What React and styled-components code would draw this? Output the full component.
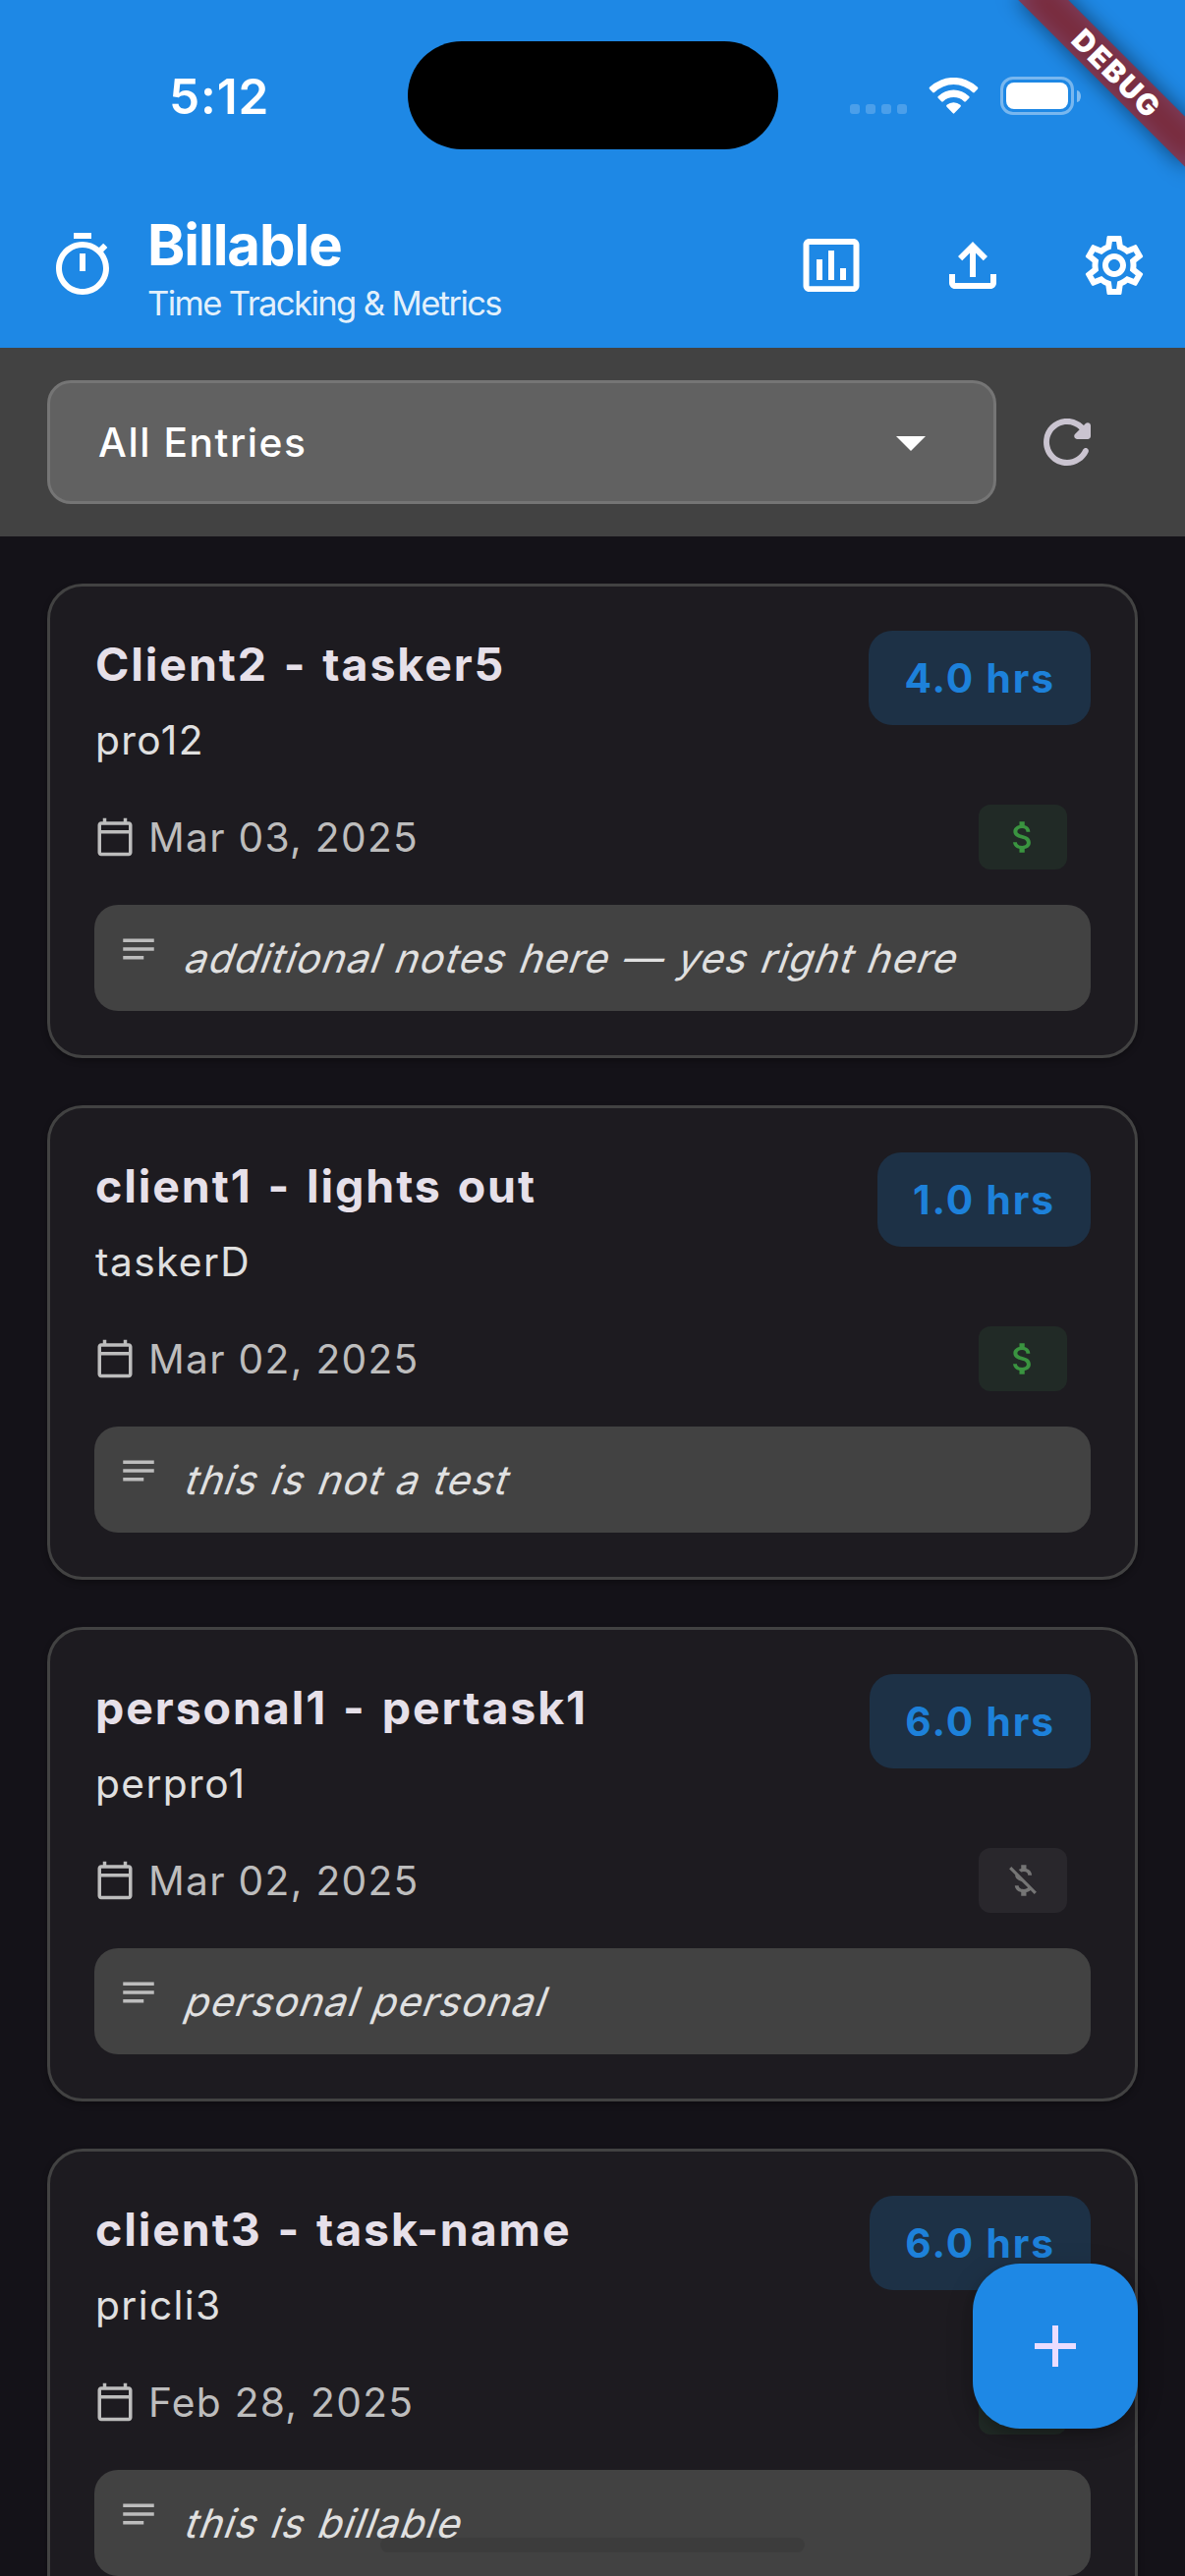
import React from "react";
import styled, { createGlobalStyle } from "styled-components";

const GlobalStyle = createGlobalStyle`
  * { box-sizing: border-box; }
  html, body { margin: 0; padding: 0; background: #141218; }
`;

const Screen = styled.div`
  position: relative;
  width: 1206px;
  height: 2622px;
  overflow: hidden;
  display: flex;
  flex-direction: column;
  background: #141218;
  font-family: Inter, Roboto, "Liberation Sans", sans-serif;
  -webkit-font-smoothing: antialiased;
`;

const Header = styled.header`
  flex: none;
  height: 354px;
  background: #1e88e5;
  color: #fff;
`;

const StatusBar = styled.div`
  height: 186px;
  padding-top: 9px;
  display: grid;
  grid-template-columns: 415px 377px 1fr;
  align-items: center;
`;

const Clock = styled.div`
  padding-left: 172px;
  font-size: 49.5px;
  line-height: 60px;
  font-weight: 600;
  letter-spacing: 0.9px;
`;

const Island = styled.div`
  height: 110px;
  margin-top: -1px;
  border-radius: 55px;
  background: #000;
`;

const StatusIcons = styled.div`
  padding-left: 73px;
  display: flex;
  align-items: center;
  gap: 22px;
`;

const Dots = styled.div`
  display: flex;
  gap: 6px;
  margin-top: 27px;
`;

const Dot = styled.i`
  width: 10px;
  height: 10px;
  border-radius: 3px;
  background: rgba(255, 255, 255, 0.2);
`;

const Battery = styled.div`
  display: flex;
  align-items: center;
  gap: 3px;
`;

const BatteryShell = styled.div`
  width: 75px;
  height: 39px;
  padding: 3px;
  border: 3px solid rgba(255, 255, 255, 0.4);
  border-radius: 13px;
  display: flex;
`;

const BatteryFill = styled.div`
  flex: 1;
  border-radius: 8px;
  background: #fff;
`;

const BatteryTip = styled.div`
  width: 4px;
  height: 12px;
  border-radius: 0 4px 4px 0 / 0 6px 6px 0;
  background: rgba(255, 255, 255, 0.45);
`;

const AppBar = styled.div`
  height: 168px;
  padding: 0 0 0 48px;
  display: flex;
  align-items: center;
`;

const Titles = styled.div`
  flex: 1;
  padding: 3px 0 0 30px;
`;

const Title = styled.h1`
  margin: 0 0 1px;
  font-size: 58px;
  line-height: 72px;
  font-weight: 700;
  letter-spacing: -1.05px;
`;

const Subtitle = styled.div`
  font-size: 34.6px;
  line-height: 44px;
  letter-spacing: -1.6px;
  color: rgba(255, 255, 255, 0.9);
`;

const IconButton = styled.button`
  width: 144px;
  height: 144px;
  padding: 0;
  border: 0;
  background: none;
  color: ${(p) => p.$color || "#fff"};
  display: flex;
  align-items: center;
  justify-content: center;
`;

const Glyph = styled.svg`
  display: block;
  flex: none;
  width: ${(p) => p.$size}px;
  height: ${(p) => p.$size}px;
  fill: currentColor;
`;

const FilterBar = styled.div`
  flex: none;
  height: 192px;
  padding: 0 48px;
  display: flex;
  align-items: center;
  background: #424242;
`;

const Select = styled.div`
  flex: 1;
  height: 126px;
  padding: 0 48px 0 49px;
  border: 3px solid #757575;
  border-radius: 24px;
  background: #616161;
  color: #fff;
  display: flex;
  align-items: center;
  justify-content: space-between;
`;

const SelectValue = styled.span`
  padding-top: 1px;
  font-size: 40.7px;
  line-height: 60px;
  font-weight: 500;
  letter-spacing: 1.55px;
`;

const List = styled.main`
  padding: 48px;
  display: flex;
  flex-direction: column;
  gap: 48px;
`;

const Card = styled.article`
  flex: none;
  height: 483px;
  padding: 45px;
  border: 3px solid #424242;
  border-radius: 36px;
  background: #1d1b20;
  box-shadow: 0 3px 6px rgba(0, 0, 0, 0.3);
`;

const CardHead = styled.div`
  height: 141px;
  padding-left: 1px;
  display: flex;
  align-items: flex-start;
  justify-content: space-between;
`;

const CardTitle = styled.h2`
  margin: 0 0 14px;
  font-size: 46.5px;
  line-height: 68px;
  font-weight: 700;
  letter-spacing: 1.9px;
  word-spacing: 3px;
  color: #e6e0e9;
`;

const Project = styled.div`
  font-size: 40.7px;
  line-height: 60px;
  letter-spacing: 1.4px;
  color: #e0e0e0;
`;

const Hours = styled.div`
  height: 96px;
  padding: 19px 36px 17px;
  border-radius: 24px;
  background: #1d3146;
  color: #1d81da;
  font-size: 40.7px;
  line-height: 60px;
  font-weight: 700;
  letter-spacing: 1.9px;
`;

const Meta = styled.div`
  margin-top: 36px;
  padding-right: 24px;
  display: flex;
  align-items: center;
  justify-content: space-between;
`;

const DateLabel = styled.div`
  display: flex;
  align-items: center;
  gap: 13px;
  color: #bdbdbd;
  font-size: 40.7px;
  line-height: 60px;
  letter-spacing: 1.3px;
`;

const DateText = styled.span`
  padding-top: 1px;
`;

const Badge = styled.div`
  width: 90px;
  height: 66px;
  border-radius: 12px;
  display: flex;
  align-items: center;
  justify-content: center;
  background: ${(p) => (p.$billable ? "#212a26" : "#29272c")};
  color: ${(p) => (p.$billable ? "#3a9440" : "#757575")};
`;

const Notes = styled.div`
  height: 108px;
  margin-top: 36px;
  padding: 24px;
  border-radius: 24px;
  background: #424242;
  color: #bdbdbd;
  display: flex;
  align-items: flex-start;
  gap: 23px;
`;

/* The upright face is slanted around its baseline to get a steep oblique. */
const NoteText = styled.span`
  display: block;
  margin-top: 1px;
  color: #e0e0e0;
  font-size: 40.7px;
  line-height: 60px;
  letter-spacing: 1.3px;
  word-spacing: 1px;
  white-space: nowrap;
  transform: skewX(-20deg);
  transform-origin: 0 45px;
`;

const AddButton = styled.button`
  position: absolute;
  left: 990px;
  top: 2304px;
  width: 168px;
  height: 168px;
  padding: 0;
  border: 0;
  border-radius: 48px;
  background: #1e88e5;
  color: #eaddff;
  display: flex;
  align-items: center;
  justify-content: center;
  box-shadow: 0 9px 15px -3px rgba(0, 0, 0, 0.2), 0 6px 30px rgba(0, 0, 0, 0.14);
`;

const HomeIndicator = styled.div`
  position: absolute;
  left: 387px;
  top: 2583px;
  width: 432px;
  height: 15px;
  border-radius: 8px;
  background: rgba(0, 0, 0, 0.08);
`;

const Ribbon = styled.div`
  position: absolute;
  left: 1086px;
  top: 84px;
  width: 240px;
  height: 36px;
  transform-origin: 120px -84px;
  transform: rotate(45deg);

  &::before {
    content: "";
    position: absolute;
    inset: 0;
    background: rgba(0, 0, 0, 0.5);
    filter: blur(11px);
  }
`;

const RibbonLabel = styled.div`
  position: relative;
  height: 36px;
  background: rgba(183, 28, 28, 0.627);
  color: #fff;
  text-align: center;
  text-indent: 8px;
  font-size: 29.8px;
  line-height: 36px;
  font-weight: 900;
  letter-spacing: 2px;
`;

const paths = {
  timer:
    "M15 1H9v2h6V1zm-4 13h2V8h-2v6zm8.03-6.61l1.42-1.42c-.43-.51-.9-.99-1.41-1.41l-1.42 1.42C16.07 4.74 14.12 4 12 4c-4.97 0-9 4.03-9 9s4.02 9 9 9 9-4.03 9-9c0-2.12-.74-4.07-1.97-5.61zM12 20c-3.87 0-7-3.13-7-7s3.13-7 7-7 7 3.13 7 7-3.13 7-7 7z",
  chart:
    "M9 17H7v-7h2v7zm4 0h-2V7h2v10zm4 0h-2v-4h2v4zm2.5 2.1h-15V5h15v14.1zm0-16.1h-15c-1.1 0-2 .9-2 2v14c0 1.1.9 2 2 2h15c1.1 0 2-.9 2-2V5c0-1.1-.9-2-2-2z",
  upload:
    "M18 15v3H6v-3H4v3c0 1.1.9 2 2 2h12c1.1 0 2-.9 2-2v-3h-2zM7 9l1.41 1.41L11 7.83V16h2V7.83l2.59 2.58L17 9l-5-5-5 5z",
  settings:
    "M19.43 12.98c.04-.32.07-.64.07-.98 0-.34-.03-.66-.07-.98l2.11-1.65c.19-.15.24-.42.12-.64l-2-3.46c-.09-.16-.26-.25-.44-.25-.06 0-.12.01-.17.03l-2.49 1c-.52-.4-1.08-.73-1.69-.98l-.38-2.65C14.46 2.18 14.25 2 14 2h-4c-.25 0-.46.18-.49.42l-.38 2.65c-.61.25-1.17.59-1.69.98l-2.49-1c-.06-.02-.12-.03-.18-.03-.17 0-.34.09-.43.25l-2 3.46c-.13.22-.07.49.12.64l2.11 1.65c-.04.32-.07.65-.07.98 0 .33.03.66.07.98l-2.11 1.65c-.19.15-.24.42-.12.64l2 3.46c.09.16.26.25.44.25.06 0 .12-.01.17-.03l2.49-1c.52.4 1.08.73 1.69.98l.38 2.65c.03.24.24.42.49.42h4c.25 0 .46-.18.49-.42l.38-2.65c.61-.25 1.17-.59 1.69-.98l2.49 1c.06.02.12.03.18.03.17 0 .34-.09.43-.25l2-3.46c.12-.22.07-.49-.12-.64l-2.11-1.65zm-1.98-1.71c.04.31.05.52.05.73 0 .21-.02.43-.05.73l-.14 1.13.89.7 1.08.84-.7 1.21-1.27-.51-1.04-.42-.9.68c-.43.32-.84.56-1.25.73l-1.06.43-.16 1.13-.2 1.35h-1.4l-.19-1.35-.16-1.13-1.06-.43c-.43-.18-.83-.41-1.23-.71l-.91-.7-1.06.43-1.27.51-.7-1.21 1.08-.84.89-.7-.14-1.13c-.03-.31-.05-.54-.05-.74s.02-.43.05-.73l.14-1.13-.89-.7-1.08-.84.7-1.21 1.27.51 1.04.42.9-.68c.43-.32.84-.56 1.25-.73l1.06-.43.16-1.13.2-1.35h1.39l.19 1.35.16 1.13 1.06.43c.43.18.83.41 1.23.71l.91.7 1.06-.43 1.27-.51.7 1.21-1.07.85-.89.7.14 1.13zM12 8c-2.21 0-4 1.79-4 4s1.79 4 4 4 4-1.79 4-4-1.79-4-4-4zm0 6c-1.1 0-2-.9-2-2s.9-2 2-2 2 .9 2 2-.9 2-2 2z",
  dropDown: "M7 10l5 5 5-5z",
  refresh:
    "M17.65 6.35c-1.63-1.63-3.94-2.57-6.48-2.31-3.67.37-6.69 3.35-7.1 7.02C3.52 15.91 7.27 20 12 20c3.19 0 5.93-1.87 7.21-4.56.32-.67-.16-1.44-.9-1.44-.37 0-.72.2-.88.53-1.13 2.43-3.84 3.97-6.8 3.31-2.22-.49-4.01-2.3-4.48-4.52C5.31 9.44 8.26 6 12 6c1.66 0 3.14.69 4.22 1.78l-1.51 1.51c-.63.63-.19 1.71.7 1.71H19c.55 0 1-.45 1-1V6.41c0-.89-1.08-1.34-1.71-.71l-.64.65z",
  calendar:
    "M20 3h-1V1h-2v2H7V1H5v2H4c-1.1 0-2 .9-2 2v16c0 1.1.9 2 2 2h16c1.1 0 2-.9 2-2V5c0-1.1-.9-2-2-2zm0 18H4V10h16v11zm0-13H4V5h16v3z",
  money:
    "M11.8 10.9c-2.27-.59-3-1.2-3-2.15 0-1.09 1.01-1.85 2.7-1.85 1.78 0 2.44.85 2.5 2.1h2.21c-.07-1.72-1.12-3.3-3.21-3.81V3h-3v2.16c-1.94.42-3.5 1.68-3.5 3.61 0 2.31 1.91 3.46 4.7 4.13 2.5.6 3 1.48 3 2.41 0 .69-.49 1.79-2.7 1.79-2.06 0-2.87-.92-2.98-2.1h-2.2c.12 2.19 1.76 3.42 3.68 3.83V21h3v-2.15c1.95-.37 3.5-1.5 3.5-3.55 0-2.84-2.43-3.81-4.7-4.4z",
  moneyOff:
    "M12.5 6.9c1.78 0 2.44.85 2.5 2.1h2.21c-.07-1.72-1.12-3.3-3.21-3.81V3h-3v2.16c-.53.12-1.03.3-1.48.54l1.47 1.47c.41-.17.91-.27 1.51-.27zM5.33 4.06L4.06 5.33 7.5 8.77c0 2.08 1.56 3.21 3.91 3.91l3.51 3.51c-.34.48-1.05.91-2.42.91-2.06 0-2.87-.92-2.98-2.1h-2.2c.12 2.19 1.76 3.42 3.68 3.83V21h3v-2.15c.96-.18 1.82-.55 2.45-1.12l2.22 2.22 1.27-1.27L5.33 4.06z",
  notes: "M3 18h12v-2H3v2zM3 6v2h18V6H3zm0 7h18v-2H3v2z",
  add: "M19 13h-6v6h-2v-6H5v-2h6V5h2v6h6v2z",
};

const Icon = ({ name, size = 72 }) => (
  <Glyph $size={size} viewBox="0 0 24 24" aria-hidden="true">
    <path d={paths[name]} />
  </Glyph>
);

const Wifi = () => (
  <svg width="51" height="37" viewBox="0 0 50 37" fill="#fff" aria-hidden="true">
    <path d="M.8 9.6A35 35 0 0 1 49.2 9.6Q50.4 10.6 49.4 11.8L46.3 15Q45.5 15.9 44.5 15A28 28 0 0 0 5.5 15Q4.5 15.9 3.7 15L.6 11.8Q-.4 10.6 .8 9.6Z" />
    <path d="M9.3 18.9A22.5 22.5 0 0 1 40.7 18.9Q41.7 19.8 40.8 20.8L37.4 24.3Q36.5 25.2 35.6 24.3A15.5 15.5 0 0 0 14.4 24.3Q13.5 25.2 12.6 24.3L9.2 20.8Q8.3 19.8 9.3 18.9Z" />
    <path d="M18.1 27.8A10.5 10.5 0 0 1 31.9 27.8Q32.9 28.7 32 29.7L25.7 36.3Q25 37 24.3 36.3L18 29.7Q17.1 28.7 18.1 27.8Z" />
  </svg>
);

const entries = [
  { title: "Client2 - tasker5", project: "pro12", hours: "4.0 hrs", date: "Mar 03, 2025", billable: true, note: "additional notes here — yes right here" },
  { title: "client1 - lights out", project: "taskerD", hours: "1.0 hrs", date: "Mar 02, 2025", billable: true, note: "this is not a test" },
  { title: "personal1 - pertask1", project: "perpro1", hours: "6.0 hrs", date: "Mar 02, 2025", billable: false, note: "personal personal" },
  { title: "client3 - task-name", project: "pricli3", hours: "6.0 hrs", date: "Feb 28, 2025", billable: true, note: "this is billable" },
];

const Entry = ({ entry }) => (
  <Card>
    <CardHead>
      <div>
        <CardTitle>{entry.title}</CardTitle>
        <Project>{entry.project}</Project>
      </div>
      <Hours>{entry.hours}</Hours>
    </CardHead>
    <Meta>
      <DateLabel>
        <Icon name="calendar" size={42} />
        <DateText>{entry.date}</DateText>
      </DateLabel>
      <Badge $billable={entry.billable}>
        <Icon name={entry.billable ? "money" : "moneyOff"} size={42} />
      </Badge>
    </Meta>
    <Notes>
      <Icon name="notes" size={42} />
      <NoteText>{entry.note}</NoteText>
    </Notes>
  </Card>
);

export default function App() {
  return (
    <>
      <GlobalStyle />
      <Screen>
        <Header>
          <StatusBar>
            <Clock>5:12</Clock>
            <Island />
            <StatusIcons>
              <Dots>
                <Dot />
                <Dot />
                <Dot />
                <Dot />
              </Dots>
              <Wifi />
              <Battery>
                <BatteryShell>
                  <BatteryFill />
                </BatteryShell>
                <BatteryTip />
              </Battery>
            </StatusIcons>
          </StatusBar>
          <AppBar>
            <Icon name="timer" />
            <Titles>
              <Title>Billable</Title>
              <Subtitle>Time Tracking &amp; Metrics</Subtitle>
            </Titles>
            <IconButton aria-label="Reports"><Icon name="chart" /></IconButton>
            <IconButton aria-label="Export"><Icon name="upload" /></IconButton>
            <IconButton aria-label="Settings"><Icon name="settings" /></IconButton>
          </AppBar>
        </Header>
        <FilterBar>
          <Select>
            <SelectValue>All Entries</SelectValue>
            <Icon name="dropDown" />
          </Select>
          <IconButton $color="#cac4d0" aria-label="Refresh"><Icon name="refresh" /></IconButton>
        </FilterBar>
        <List>
          {entries.map((entry) => (
            <Entry key={entry.title} entry={entry} />
          ))}
        </List>
        <AddButton aria-label="Add entry"><Icon name="add" /></AddButton>
        <HomeIndicator />
        <Ribbon>
          <RibbonLabel>DEBUG</RibbonLabel>
        </Ribbon>
      </Screen>
    </>
  );
}
